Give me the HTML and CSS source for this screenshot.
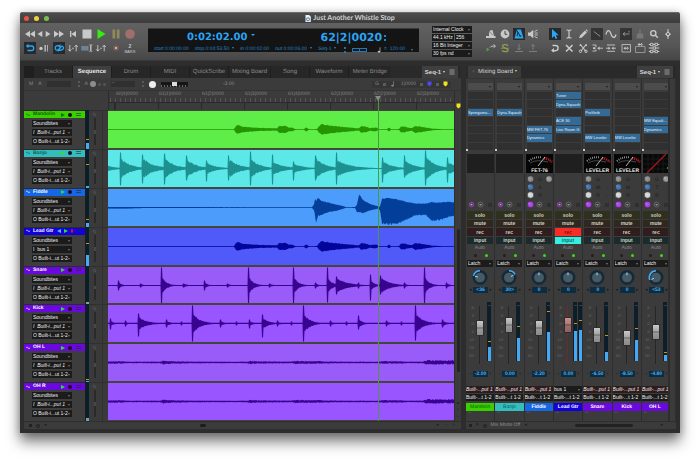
FILE: index.html
```html
<!DOCTYPE html>
<html lang="en">
<head>
<meta charset="utf-8">
<title>Just Another Whistle Stop</title>
<link rel="stylesheet" href="styles.css">
</head>
<body>
<svg class="sprite" aria-hidden="true">
  <symbol id="rewind" viewBox="0 0 12 12"><path fill="currentColor" d="M6 2.8v6.4L1 6zM11 2.8v6.4L6 6z"/></symbol>
  <symbol id="back" viewBox="0 0 6 12"><path fill="currentColor" d="M5.3 3v6L.6 6z"/></symbol>
  <symbol id="ahead" viewBox="0 0 6 12"><path fill="currentColor" d="M.7 3v6l4.7-3z"/></symbol>
  <symbol id="forward" viewBox="0 0 12 12"><path fill="currentColor" d="M1 2.8v6.4L6 6zM6 2.8v6.4L11 6z"/></symbol>
  <symbol id="start" viewBox="0 0 12 12"><path fill="currentColor" d="M3 3h1.3v6H3zM9 3v6L4.3 6z"/></symbol>
  <symbol id="stop" viewBox="0 0 12 12"><path fill="currentColor" d="M1.5 1.5h9v9h-9z"/></symbol>
  <symbol id="play" viewBox="0 0 12 12"><path fill="#35ee10" d="M2.5 1v10l8-5z"/></symbol>
  <symbol id="pause" viewBox="0 0 12 12"><path fill="#8f8b58" d="M2.5 1.5h2.7v9H2.5zM6.8 1.5h2.7v9H6.8z"/></symbol>
  <symbol id="record" viewBox="0 0 12 12"><circle cx="6" cy="6" r="4.8" fill="#a06e6b"/></symbol>
  <symbol id="loop-back" viewBox="0 0 12 12"><path fill="none" stroke="currentColor" stroke-width="1.3" d="M3 4h4.5a2.2 2.2 0 0 1 0 4.5h-4"/><path fill="currentColor" d="M4.5 1.8v4.4L1.8 4z"/></symbol>
  <symbol id="auto-stop" viewBox="0 0 12 12"><circle cx="3" cy="6.4" r="1.7" fill="currentColor"/><path fill="currentColor" d="M6.5 3h1.3v6.4H6.5zM9 3h.8v6.4H9z"/></symbol>
  <symbol id="link" viewBox="0 0 12 12"><path fill="none" stroke="currentColor" stroke-width="1.3" d="M7 4.2C4.500 3 2.200 4 2.200 6s2.300 3 4 1.200L7.800 5C9 3.300 10.500 4.400 10.500 6S8 9 5.500 7.800"/><path fill="currentColor" d="M7.500 2v4L5.200 4.200zM4.800 6.200v3.900l2.400-2z"/></symbol>
  <symbol id="swap" viewBox="0 0 12 12"><path fill="none" stroke="currentColor" stroke-width=".9" d="M2.800 3v6M1.200 7.300l1.600 1.900L4.400 7.300M9.200 9.300V3.200M7.600 5l1.600-1.900L10.800 5"/><circle cx="6" cy="6.300" r=".9" fill="#93b58a"/></symbol>
  <symbol id="step" viewBox="0 0 12 12"><path fill="#7790a5" d="M.5 4h7v4.500h-7z"/><path stroke="#59636c" stroke-width=".5" d="M2.200 4v4.500M4 4v4.500M5.700 4v4.500"/><path fill="none" stroke="currentColor" stroke-width=".9" d="M8.300 2.800c1 0 1.500.3 1.500.8v5c0 .5-.5.800-1.500.8M11.300 2.800c-1 0-1.500.3-1.500.8v5c0 .5.500.800 1.500.8"/></symbol>
  <symbol id="punch" viewBox="0 0 12 12"><circle cx="6" cy="6" r="2.800" fill="#815f5c"/><circle cx="6" cy="6" r="1.100" fill="#dbc4bf"/></symbol>

  <symbol id="pedal" viewBox="0 0 12 12"><path fill="currentColor" d="M4 8c-.5-4.500 1-6.500 3.500-6l1.500 6h1.500v2h-8zM1 8h2.500v2H1z"/><path stroke="#555" stroke-width=".6" d="M4.800 3.800 7.500 7"/></symbol>
  <symbol id="clock" viewBox="0 0 12 12"><circle cx="6" cy="6" r="4.400" fill="currentColor"/><path d="M6 3v3.300h2.300" fill="none" stroke="#444" stroke-width="1"/></symbol>
  <symbol id="metronome" viewBox="0 0 12 12"><path fill="currentColor" d="M4 1.500h4L10.500 10.500h-9z"/><path stroke="#242628" stroke-width="1" d="m3.800 2.500 3.700 6M5.800 8h2.500M4 8.200l1-4"/></symbol>
  <symbol id="speaker" viewBox="0 0 12 12"><path fill="currentColor" d="M1 4.500h2.200L6.300 1.700v8.600L3.200 7.700H1z"/><path fill="none" stroke="currentColor" stroke-width=".9" d="M7.500 3.500 10.500 2M7.500 5h3.300M7.500 7h3.300M7.500 8.500l3 1.500"/></symbol>
  <symbol id="pointer" viewBox="0 0 12 12"><path fill="currentColor" d="M3 1v9l2.200-2 1.500 3 1.600-.8-1.500-2.900H9.800z"/></symbol>
  <symbol id="ibeam" viewBox="0 0 12 12"><path fill="none" stroke="currentColor" stroke-width="1.200" d="M3.500 2C5 2 6 2.300 6 3.300v5.400C6 9.700 5 10 3.500 10M8.500 2C7 2 6 2.300 6 3.300v5.400C6 9.700 7 10 8.500 10"/></symbol>
  <symbol id="pencil" viewBox="0 0 12 12"><path fill="currentColor" d="M2 10.300 3 7.500l5-5L9.900 4.400l-5 5zM8.500 2l.8-.7L11 3l-.7.800z"/></symbol>
  <symbol id="ramp" viewBox="0 0 12 12"><path stroke="currentColor" stroke-width=".9" d="m2.800 3.500 6.400 4.800"/></symbol>
  <symbol id="sine" viewBox="0 0 12 12"><path fill="none" stroke="currentColor" stroke-width="1.200" d="M1 6.500C2 1.500 4.500 1.500 6 6s4 4.500 5 .5"/></symbol>
  <symbol id="nudge" viewBox="0 0 12 12"><path fill="none" stroke="currentColor" stroke-width=".9" d="M9.500 6H3M5 4.300 3 6l2 1.700M9 3v1.500"/></symbol>
  <symbol id="brush" viewBox="0 0 12 12"><path fill="#777" d="M5.400 1.500h1.200v4H9l.5 5h-7l.5-5h2.400z"/></symbol>
  <symbol id="zoom" viewBox="0 0 12 12"><circle cx="5.300" cy="5.200" r="2.600" fill="none" stroke="currentColor" stroke-width="1.400"/><path stroke="currentColor" stroke-width="1.600" d="m7.300 7.300 2.500 2.500"/></symbol>
  <symbol id="anchor" viewBox="0 0 12 12"><path stroke="currentColor" stroke-width="1" d="M6 1v10"/><path fill="currentColor" d="M6 3.200 9 6.200 6 9 3 6.200z"/><circle cx="6" cy="6" r=".9" fill="#444"/></symbol>
  <symbol id="send" viewBox="0 0 12 12"><path fill="#5c9d4d" d="M1.500 5.500v4L4.500 7.500z"/><path fill="none" stroke="currentColor" stroke-width=".9" d="M5 5.500C6 4 7.500 4 10 4.200M8.500 2.500l2 1.700-2 1.600"/></symbol>
  <symbol id="solo" viewBox="0 0 12 12"><path fill="none" stroke="#959b57" stroke-width="1.300" d="M9 3.700C7.500 2.300 3.500 2.200 3.500 4.300S9 5.700 9 8 4.500 10 3 8.500"/><path stroke="#959b57" stroke-width=".8" d="M1.800 6.200h8.400"/></symbol>
  <symbol id="down" viewBox="0 0 12 12"><path fill="none" stroke="#888" stroke-width=".8" d="M6 2v5.500M4.500 6 6 7.800 7.500 6M2 9.500h8"/></symbol>
  <symbol id="up" viewBox="0 0 12 12"><path fill="none" stroke="#888" stroke-width=".8" d="M6 8V2.500M4.500 4.300 6 2.500l1.500 1.800M2 9.500h8"/></symbol>
  <symbol id="cycle" viewBox="0 0 12 12"><path fill="none" stroke="currentColor" stroke-width="1.400" d="M3.500 3.500h3a2.500 2.500 0 0 1 0 5.200H3"/><path fill="currentColor" d="M5 6v4.500L2 8.500z"/></symbol>
  <symbol id="cross" viewBox="0 0 12 12"><path stroke="currentColor" stroke-width="1.600" d="m3 3 6.500 6.500M9.500 3 3 9.500"/></symbol>
  <symbol id="scissors" viewBox="0 0 12 12"><path stroke="currentColor" stroke-width="1.100" d="m3 2 5.500 7M9.500 2 4 9"/><path fill="none" stroke="currentColor" d="M2.500 3.500h2M8 3.500h2"/><circle cx="3.500" cy="9.300" r="1.200" fill="none" stroke="currentColor"/><circle cx="9" cy="9.300" r="1.200" fill="none" stroke="currentColor"/></symbol>
  <symbol id="split" viewBox="0 0 12 12"><path fill="none" stroke="currentColor" stroke-width=".9" d="M1.500 3H5v2M5 7.500V9H1.500M8 6.200h4"/><path fill="currentColor" d="M2 5.300h2.500v1.800H2zM8.500 4.300v4L6.300 6.200z"/></symbol>
  <symbol id="join" viewBox="0 0 12 12"><path fill="none" stroke="currentColor" stroke-width=".9" d="M2 3h8M2 9.300h8M1 6.200h3M8 6.200h3"/><path fill="currentColor" d="M3.500 4.500v3.400L5.500 6.200zM8.500 4.500v3.400L6.500 6.200z"/></symbol>
  <symbol id="fit" viewBox="0 0 12 12"><path fill="none" stroke="currentColor" stroke-width=".8" d="M2 2.500h8.500v7.500H2z"/><path fill="currentColor" d="M5.500 4.500v3.400l-2-1.700zM7 4.500v3.400l2-1.700zM5 5.700h2.500v1H5z"/></symbol>
  <symbol id="layer" viewBox="0 0 12 12"><path fill="none" stroke="#a4a4a4" stroke-width=".8" d="M1.500 4.500h9.500v6H1.500z"/><path fill="currentColor" d="M5.500.8v3.400l-2-1.700zM7 .8v3.400l2-1.700zM5 2h2.500v1H5z"/></symbol>
  <symbol id="sliders" viewBox="0 0 12 12"><path stroke="currentColor" stroke-width="1" d="M.8 2.500h10.500M.8 6h10.500M.8 9.500h10.500"/><path fill="#555" stroke="currentColor" stroke-width=".9" d="M2.500 1.300h2.500v2.400H2.500zM7 1.300h2.500v2.400H7zM5 4.800h2.500v2.400H5zM2.500 8.300h2.500v2.400H2.500zM7 8.300h2.500v2.400H7z"/></symbol>
  <symbol id="menu" viewBox="0 0 6 6"><path stroke="currentColor" stroke-width="1" d="M.5 1h5M.5 3h5M.5 5h5"/></symbol>
  <symbol id="note" viewBox="0 0 4 6"><path stroke="currentColor" stroke-width=".7" d="M3 .3v4.300"/><ellipse cx="2" cy="4.700" rx="1.300" ry=".9" fill="currentColor"/></symbol>
  <symbol id="pin" viewBox="0 0 5 6"><path fill="currentColor" d="M.5.500h4v3.200L2.500 5.500l-2-1.800z"/></symbol>
</svg>

<div class="window">
  <header class="titlebar">
    <span class="lights"><i class="red"></i><i class="amber"></i><i class="green"></i></span>
    <h1><svg class="doc" viewBox="0 0 6 7"><path fill="#e8eef4" d="M.5 0h3.700L5.800 1.700V7H.5z"/><circle cx="3" cy="4.300" r="1.500" fill="none" stroke="#4b79ad"/></svg>Just Another Whistle Stop</h1>
  </header>

  <div class="toolbar">
    <div class="transport">
      <button aria-label="Rewind"><svg><use href="#rewind"/></svg></button>
      <span class="pair"><button aria-label="Back"><svg><use href="#back"/></svg></button><button aria-label="Ahead"><svg><use href="#ahead"/></svg></button></span>
      <button aria-label="Fast forward"><svg><use href="#forward"/></svg></button>
      <button aria-label="Return to start"><svg><use href="#start"/></svg></button>
      <button aria-label="Stop"><svg><use href="#stop"/></svg></button>
      <button aria-label="Play"><svg><use href="#play"/></svg></button>
      <button aria-label="Pause"><svg><use href="#pause"/></svg></button>
      <button aria-label="Record"><svg><use href="#record"/></svg></button>
      <button class="on" aria-label="Auto rewind"><svg><use href="#loop-back"/></svg></button>
      <button aria-label="Auto stop"><svg><use href="#auto-stop"/></svg></button>
      <button class="on" aria-label="Link"><svg><use href="#link"/></svg></button>
      <button aria-label="Slave"><svg><use href="#swap"/></svg></button>
      <button aria-label="Step"><svg><use href="#step"/></svg></button>
      <button aria-label="Memory"><svg><use href="#swap"/></svg></button>
      <button aria-label="Punch"><svg><use href="#punch"/></svg></button>
      <button class="countoff"><b>2</b><span>BARS</span></button>
    </div>

    <div class="lcd">
      <div class="lcd-main">
        <span class="time">0:02:02.00<i class="tri"></i></span>
        <span class="bars">62|2|0020<i class="updown"></i></span>
      </div>
      <div class="lcd-sub">
        <span>start 0:00:00.00</span>
        <span>stop 0:04:53.50<i class="tri"></i></span>
        <span>in 0:00:02.00</span>
        <span>out 0:00:06.00<i class="tri"></i></span>
        <span>Seq-1<i class="tri"></i></span>
        <i class="updown"></i>
        <span class="scrub"></span>
        <span class="tempo"><svg><use href="#note"/></svg>= &nbsp;120.00<i class="tri"></i></span>
      </div>
    </div>

    <div class="clocks">
      <span class="pick"><select aria-label="Clock"><option>Internal Clock</option></select></span>
      <span class="split"><span class="pick"><select aria-label="Rate"><option>44.1 kHz</option></select></span><span class="pick"><select aria-label="Buffer"><option>256</option></select></span></span>
      <span class="pick"><select aria-label="Depth"><option>16 Bit Integer</option></select></span>
      <span class="pick"><select aria-label="Frames"><option>30 fps nd</option></select></span>
    </div>

    <div class="tools four">
      <button aria-label="Pedal"><svg><use href="#pedal"/></svg></button>
      <button aria-label="Clock"><svg><use href="#clock"/></svg></button>
      <button class="on" aria-label="Click"><svg><use href="#metronome"/></svg></button>
      <button aria-label="Audible"><svg><use href="#speaker"/></svg></button>
      <button aria-label="Send"><svg><use href="#send"/></svg></button>
      <button aria-label="Solo"><svg><use href="#solo"/></svg></button>
      <button aria-label="Down"><svg><use href="#down"/></svg></button>
      <button aria-label="Up"><svg><use href="#up"/></svg></button>
    </div>
    <div class="tools nine">
      <button class="on" aria-label="Pointer"><svg><use href="#pointer"/></svg></button>
      <button aria-label="I-beam"><svg><use href="#ibeam"/></svg></button>
      <button aria-label="Pencil"><svg><use href="#pencil"/></svg></button>
      <button class="off" aria-label="Line"><svg><use href="#ramp"/></svg></button>
      <button aria-label="Curve"><svg><use href="#sine"/></svg></button>
      <button class="off" aria-label="Nudge"><svg><use href="#nudge"/></svg></button>
      <button aria-label="Brush"><svg><use href="#brush"/></svg></button>
      <button aria-label="Zoom"><svg><use href="#zoom"/></svg></button>
      <button aria-label="Anchor"><svg><use href="#anchor"/></svg></button>
      <button aria-label="Cycle"><svg><use href="#cycle"/></svg></button>
      <button aria-label="Mute"><svg><use href="#cross"/></svg></button>
      <button aria-label="Scissors"><svg><use href="#scissors"/></svg></button>
      <button aria-label="Split"><svg><use href="#split"/></svg></button>
      <button aria-label="Join"><svg><use href="#join"/></svg></button>
      <button aria-label="Fit"><svg><use href="#fit"/></svg></button>
      <button aria-label="Layer"><svg><use href="#layer"/></svg></button>
      <button aria-label="Sliders"><svg><use href="#sliders"/></svg></button>
    </div>
  </div>

  <main class="panels">
    <section class="panel editor">
      <nav class="tabs">
        <span class="lead"></span>
        <a href="#tracks">Tracks</a><a href="#sequence" class="current">Sequence</a><a href="#drum">Drum</a><a href="#midi">MIDI</a><a href="#quick">QuickScribe</a><a href="#mixing" class="long">Mixing Board</a><a href="#song">Song</a><a href="#wave">Waveform</a><a href="#bridge" class="long last">Meter Bridge</a>
        <button class="seq">Seq-1<i class="tri"></i><svg><use href="#menu"/></svg></button>
      </nav>
      <div class="infobar">
        <span>M</span><span>A</span><span class="well"></span><i class="updown"></i>
        <span class="autos">A<i class="dot big"></i><i class="dot"></i><i class="dot"></i></span>
        <span class="well">–</span><i class="updown"></i>
        <i class="dot white"></i>
        <span class="ladder"><i></i></span>
        <span class="gain">-3.00</span>
        <span class="snap"><span>G</span><i class="sq"></i><svg><use href="#note"/></svg><span class="unit">1|0000</span><i class="sq dim"></i><svg class="blue"><use href="#pin"/></svg><i class="sq dim"></i><svg class="yellow"><use href="#pin"/></svg></span>
      </div>
      <div class="timeline">
        <div class="ruler">
          <ol class="marks"><li>60|4|0000</li><li>61|1|0000</li><li>61|2|0000</li><li>61|3|0000</li><li>61|4|0000</li><li>62|1|0000</li><li>62|2|0000</li><li>62|3|0000</li></ol>
          <div class="ticks"></div>
          <div class="lane"></div>
        </div>
        <div class="rows" id="rows"></div>
        <div class="vscroll"><svg class="yellow"><use href="#pin"/></svg><i class="thumb"></i><span>▴</span><span>+</span><span>−</span></div>
        <div class="overlay"><div class="playhead"></div></div>
      </div>
      <footer class="foot"><span class="left"><i class="sq"></i><i class="ring"></i>◂</span><i class="thumb"></i><span class="right"><span>▸</span><span>−</span><span>+</span></span></footer>
    </section>

    <section class="panel mixer">
      <nav class="tabs">
        <a href="#mixing" class="board"><small>×</small>Mixing Board<i class="tri"></i></a>
        <button class="seq">Seq-1<i class="tri"></i><svg><use href="#menu"/></svg></button>
      </nav>
      <div class="desk"><div class="channels" id="channels"></div><div class="gutter"></div></div>
      <footer class="foot"><span class="left"><i class="sq"></i>▾<i class="ring"></i><span class="mode">Mix Mode Off</span></span><span>◂</span><i class="thumb wide"></i><span>▸</span></footer>
    </section>
  </main>
</div>
<script src="script.js"></script>
</body>
</html>
```
FILE: styles.css
```css
* { box-sizing: border-box; }
body {
  margin: 0;
  padding: 12px 20px 28px;
  height: 100vh;
  display: flex;
  background: #fff;
  color: #c8c8c8;
  font: 5px/7px "Liberation Sans", Arial, sans-serif;
  text-rendering: geometricPrecision;
}
button, select, input { font: inherit; color: inherit; margin: 0; padding: 0; border: 0; background: none; border-radius: 0; }
a { color: inherit; text-decoration: none; }
svg { display: block; }
i { font-style: normal; display: inline-block; }
.sprite { position: absolute; width: 0; height: 0; }

.window {
  flex: 1;
  min-width: 0;
  display: flex;
  flex-direction: column;
  background: #2d2d2d;
  border-radius: 3px 3px 0 0;
  box-shadow: 0 9px 14px rgba(0, 0, 0, .5), 0 1px 8px rgba(0, 0, 0, .25);
}

.titlebar {
  flex: none;
  height: 11px;
  display: grid;
  grid-template-columns: 1fr auto 1fr;
  align-items: center;
  padding: 0 4px;
  border-top: 1px solid #6a6a6a;
  border-radius: 3px 3px 0 0;
  background: linear-gradient(#4c4c4c, #3d3d3d);
}
.titlebar h1 { margin: 0; display: flex; gap: 2px; align-items: center; font: bold 7px/10px Lato, "Liberation Sans", sans-serif; color: #d2d2d2; }
.doc { width: 6px; height: 7px; }
.lights { display: flex; gap: 5px; }
.lights i { width: 5px; height: 5px; border-radius: 50%; }
.red { background: #f0503f; }
.amber { background: #f3cf3a; }
.green { background: #7cc04b; }

.toolbar {
  flex: none;
  height: 38px;
  display: flex;
  padding: 3px 5px 4px 3px;
  background: linear-gradient(#616161, #565656 60%, #464646);
  border-bottom: 1px solid #3a3a3a;
}
.toolbar > * { flex: none; }
.transport, .tools { display: grid; grid-auto-rows: 14px; align-items: center; align-content: start; color: #c9c9c9; padding-top: 1px; }
.transport { grid-template-columns: repeat(8, 1fr); width: 114px; }
.transport button, .tools button { width: 12px; height: 12px; justify-self: center; }
.transport svg, .tools svg { width: 12px; height: 12px; }
.transport .pair { display: flex; justify-content: center; gap: 2px; }
.transport .pair button, .transport .pair svg { width: 6px; }
button.on { background: #28292b; color: #28a8f4; }
button.off { background: #333435; color: #999; }
.countoff { display: flex; flex-direction: column; align-items: center; font-size: 4px; line-height: 5px; padding-top: 1px; }
.countoff b { font-size: 5px; line-height: 6px; }

.toolbar .lcd { flex: 1 1 0; min-width: 0; margin: 2px 0 4px 11px; background: #141414; color: #2ba4f5; border-top: 1px solid #3a3a3a; padding: 2px 6px; white-space: nowrap; }
.lcd-main { display: flex; gap: 66px; padding-left: 33px; font: bold 10px/13px "DejaVu Sans", sans-serif; }
.lcd-main .bars { font-size: 11px; }
.lcd-sub { display: flex; gap: 6px; align-items: center; color: #2387cd; padding-top: 2px; }
.tri { width: 0; height: 0; border: solid transparent; border-width: 2px 1px 0; border-top-color: currentColor; margin-left: 3px; vertical-align: 1px; }
.lcd-main .tri { vertical-align: 4px; border-width: 2px 2px 0; }
.updown { width: 2px; height: 6px; background: linear-gradient(currentColor 2px, transparent 2px 4px, currentColor 4px); margin-left: 2px; opacity: .8; }
.scrub { width: 23px; height: 4px; border: 1px solid #1f79b8; margin: 0 4px 0 0; background: linear-gradient(90deg, transparent 45%, #1f79b8 45% 55%, transparent 55%); }
.tempo { display: flex; align-items: center; gap: 3px; }
.tempo svg { width: 4px; height: 6px; color: #b9c4cc; }

.pick { position: relative; display: block; background: #1b1b1b; min-width: 0; }
.pick select { appearance: none; display: block; width: 100%; height: 7px; line-height: 7px; padding: 0 1px; color: #eee; outline: 0; }
.pick::after { content: ""; position: absolute; right: 2px; top: 3px; border: solid transparent; border-width: 2px 1px 0; border-top-color: #777; }
.clocks { width: 40px; margin: 0 0 0 13px; display: grid; gap: 1px; align-content: start; }
.clocks .split { display: grid; grid-template-columns: 22px 1fr; gap: 1px; }
.clocks .split .pick::after { display: none; }

.tools.four { width: 56px; grid-template-columns: repeat(4, 1fr); margin-left: 12px; }
.tools.nine { width: 127px; grid-template-columns: repeat(9, 1fr); margin-left: 8px; }

.panels { flex: 1; min-height: 0; display: grid; grid-template-columns: 437fr 210fr; grid-template-rows: minmax(0, 1fr); gap: 5px; padding: 5px 4px 4px; }
.panel { display: flex; flex-direction: column; min-width: 0; min-height: 0; background: #3b3b3b; }

.tabs { flex: none; height: 12px; display: flex; background: #2a2a2a; font-size: 6px; line-height: 12px; color: #8b8b8b; padding-right: 3px; }
.tabs a { flex: 0 0 39px; text-align: center; background: #272727; border-right: 1px solid #1e1e1e; white-space: nowrap; }
.tabs .lead { width: 10px; background: #1f1f1f; }
.tabs a.long { flex-basis: 42px; }
.tabs a.last { border: 0; }
.tabs a.current { background: #3f3f3f; color: #e6e6e6; font-weight: bold; }
.tabs .seq { margin-left: auto; width: 36px; height: 12px; display: flex; align-items: center; justify-content: center; background: #3f3f3f; color: #d8d8d8; font-weight: bold; }
.tabs .seq .tri { margin-left: 2px; }
.tabs .seq svg { width: 6px; height: 6px; margin-left: 4px; color: #999; }
.tabs a.board { flex: 0 0 53px; background: #3b3b3b; border: 0; margin-left: 2px; color: #d4d4d4; }
.board small { font-size: 5px; color: #666; margin-right: 3px; }
.board .tri { margin-left: 2px; }

.infobar { flex: none; height: 13px; display: flex; align-items: center; gap: 5px; padding: 0 10px 0 5px; color: #888; border-bottom: 1px solid #333; }
.infobar > * { flex: none; }
.well { width: 24px; height: 6px; background: #303030; line-height: 5px; padding-left: 1px; }
.infobar .updown, .infobar .sq { opacity: .4; }
.autos { display: flex; align-items: center; gap: 2px; }
.dot { width: 3px; height: 3px; border-radius: 50%; background: #555; }
.dot.big { width: 6px; height: 6px; background: #8c8c8c; }
.dot.white { width: 7px; height: 7px; background: #eee; }
.ladder { width: 27px; height: 5px; background: repeating-linear-gradient(90deg, #666 0 1px, #1d1d1d 1px 3px) bottom / 100% 2px no-repeat, #161616; display: flex; justify-content: center; }
.ladder i { width: 5px; height: 4px; background: #ddd; }
.gain { margin-left: 30px; }
.snap { margin-left: auto; display: flex; align-items: center; gap: 4px; background: #353535; padding: 0 3px; }
.snap svg, .vscroll svg { width: 5px; height: 6px; }
.snap .unit { margin-left: 2px; }
.sq { width: 3px; height: 3px; background: #999; }
.blue { color: #4c48f5; }
.yellow { color: #f5e21b; }

.timeline { flex: 1; min-height: 0; position: relative; display: grid; grid-template: 19px minmax(0, 1fr) / minmax(0, 1fr) 7px; }
.ruler { margin-left: 84px; border-left: 1px solid #2c2c2c; display: flex; flex-direction: column; overflow: hidden; }
.marks { list-style: none; margin: 0; padding: 0 0 0 7px; display: flex; color: #848484; height: 7px; }
.marks li { flex: 0 0 43px; }
.ticks { height: 4px; background: repeating-linear-gradient(90deg, #666 0 1px, transparent 1px 5px) 6px 0; opacity: .6; }
.lane { flex: 1; border-top: 1px solid #2a2a2a; background: repeating-linear-gradient(90deg, #2a2a2a 0 1px, transparent 1px 43px) 6px 0; }
.rows { grid-row: 2; display: grid; grid-auto-rows: minmax(0, 1fr); background: #45453a; }
.row { display: grid; grid-template-columns: 61px 4px 19px minmax(0, 1fr); grid-template-rows: minmax(0, 1fr); min-height: 0; }
.strip { background: #3d3d3d; overflow: hidden; border-top: 1px solid #2b2b2b; }
.strip h2 { margin: 0; height: 7px; display: flex; align-items: center; gap: 3px; padding: 0 4px 0 2px; font: bold 5px/7px "Liberation Sans", Arial, sans-serif; background: var(--name); color: var(--ink); white-space: nowrap; }
.strip h2 span { flex: 1; }
.strip h2 svg { width: 4px; height: 4px; flex: none; }
.strip h2 .rec { width: 4px; height: 4px; border-radius: 50%; background: #200814; }
.strip h2 .rec.armed { background: #e3141b; }
.strip h2 .opts { width: 5px; height: 4px; margin-left: 1px; background: repeating-linear-gradient(currentColor 0 1px, transparent 1px 2px); opacity: .55; color: #223; }
.ports { width: 40px; margin: 2px 0 0 8px; display: grid; gap: 2px; }
.ports .italic select, .outs .italic select { font-style: italic; }
.vu { position: relative; background: #08202e; border-left: 1px solid #1c1c1c; overflow: hidden; }
.vu b, .vu u { position: absolute; left: 0; right: 0; bottom: 0; background: #45a9f5; }
.vu u { height: 1px; background: #c9951f; }
.side { background: linear-gradient(90deg, transparent 13px, #303030 13px 14px, transparent 14px), #3a3a3a; border-top: 1px solid #303030; display: grid; grid-template: 6px 1fr / 9px; justify-items: center; padding: 1px 0 4px 1px; color: #5c5c5c; }
.side svg { width: 5px; height: 5px; }
.side i { width: 2px; background: linear-gradient(#2a2a2a 45%, #484848 45% 58%, #2a2a2a 58%); }
.clip { margin: 1px 0; background: var(--clip); min-height: 0; overflow: hidden; }
.clip svg { width: 100%; height: 100%; }
.clip path { fill: var(--wave); }
.vscroll { grid-area: 1 / 2 / 3 / 3; min-height: 0; display: flex; flex-direction: column; align-items: center; border-left: 1px solid #2e2e2e; padding-top: 12px; color: #222; }
.vscroll .thumb { width: 3px; flex: 0 0 45%; margin: 120px 0 auto; background: #242424; border-radius: 2px; }
.overlay { position: absolute; inset: 6px 7px 0 84px; pointer-events: none; }
.playhead { position: absolute; left: 78%; top: 0; bottom: 0; width: 1px; background: #4a9b3a; }
.playhead::before { content: ""; position: absolute; left: -3px; top: -1px; border: solid transparent; border-width: 5px 3px 0; border-top-color: #8a8a8a; }

.foot { flex: none; height: 8px; display: flex; align-items: center; gap: 4px; padding: 0 6px 0 5px; color: #222; border-top: 1px solid #2e2e2e; }
.foot .left, .foot .right { display: flex; align-items: center; gap: 4px; white-space: nowrap; }
.foot .ring { width: 4px; height: 4px; border: 1px solid #222; border-radius: 50%; }
.foot .sq { background: #222; }
.editor .foot .thumb { width: 6px; height: 3px; background: #1c1c1c; border-radius: 2px; margin-left: 149px; }
.editor .foot .right { margin-left: auto; gap: 5px; }
.foot .mode { color: #8b8b8b; }
.foot .thumb.wide { flex: 0 0 58px; height: 3px; border-radius: 2px; background: #222; margin: 0 24px 0 44px; }
.mixer .foot { padding: 0 9px 0 3px; }

.desk { flex: 1; min-height: 0; display: flex; }
.channels { flex: 1; min-width: 0; display: grid; grid-template-columns: repeat(6, minmax(0, 13fr)) minmax(0, 12fr); grid-template-rows: minmax(0, 1fr); overflow: hidden; }
.gutter { flex: 0 0 7px; border: solid #2e2e2e; border-width: 1px 1px 0; }
.channel { display: flex; flex-direction: column; min-height: 0; padding-top: 4px; overflow: hidden; border-right: 1px solid #2e2e2e; border-top: 1px solid #333; }
.channel > * { flex: none; width: 28px; }
.source { padding: 0 1px 0 2px; }
.source .pick { background: #4c4c4c; }
.source .pick::after { border-top-color: #1c1c1c; }
.slots { height: 58px; display: grid; grid-auto-rows: 1fr; gap: 1px; padding: 0 1px 0 2px; margin-top: 2px; }
.slots button { background: #303030; color: #e6f1fa; font-size: 4px; text-align: left; line-height: 7px; white-space: nowrap; overflow: hidden; min-width: 0; min-height: 0; }
.slots button.used { background: #336a96; }
.slots + .grip { width: 2px; height: 2px; background: #cfcfb8; margin-top: -1px; }
.screen { height: 19px; margin: 3px 0 0 1px; }
.channel > .screen { width: 27px; background: #1f1f1f; }
.screen svg { width: 27px; height: 19px; }
.fx { height: 34px; margin-top: 2px; }
.fx svg { width: 28px; height: 34px; }
.fx text { font-size: 5px; fill: #1c1c1c; text-anchor: middle; }
.modes { height: 33px; display: grid; grid-auto-rows: 1fr; gap: 1px; padding: 0 1px; margin-top: 2px; font-weight: bold; color: #cfcfc0; }
.modes button { line-height: 6px; text-align: center; min-height: 0; }
.modes .solo { background: #30301e; }
.modes .mute { background: #30281f; }
.modes .rec { background: #301d1e; }
.modes .input { background: #1b2b2c; }
.modes .rec.lit { background: #fa2c28; color: #7d1512; }
.modes .input.lit { background: #35f0e2; color: #166d68; }
.auto { text-align: center; line-height: 7px; color: #8a8a8a; margin-top: 1px; }
.leds { display: flex; justify-content: center; gap: 8px; height: 7px; align-items: center; padding-left: 1px; }
.leds i { width: 3px; height: 3px; border-radius: 50%; background: #3a1416; }
.leds .go { background: #3ddb14; }
.latch { padding: 0 1px; margin-top: 1px; }
.knob { height: 17px; margin-top: 2px; }
.num { display: flex; align-items: center; justify-content: space-between; padding: 0 2px 0 3px; color: #1c1c1c; height: 6px; line-height: 6px; }
.num b { width: 15px; background: #0e2c3f; color: #41b0f7; text-align: center; }
.num.pan { margin-top: 1px; }
.channel > .mix { flex: 1; }
.mix { margin-top: 9px; display: grid; grid-template: minmax(0, 1fr) / 10px 8px 3px 1fr; min-height: 0; }
.scale { list-style: none; margin: 0; padding: 3px 1px 6px; font-size: 4px; line-height: 5px; color: #666; display: flex; flex-direction: column; justify-content: space-between; text-align: right; }
.fader { appearance: none; writing-mode: vertical-lr; direction: rtl; width: 8px; height: calc(100% - 4px); margin-top: 4px; background: linear-gradient(90deg, transparent 3px, var(--rail, #262626) 3px 4px, transparent 4px); }
.fader::-webkit-slider-thumb { appearance: none; width: 8px; height: 16px; border-radius: 1px; border: 1px solid #2d2d2d; background: var(--cap, linear-gradient(#c9c9c9, #a5a5a5 45%, #777 47% 53%, #9a9a9a 55%, #8a8a8a)); }
.armed .fader { --rail: #6b2c2c; --cap: linear-gradient(#c79090, #ad7979 45%, #7d5050 47% 53%, #a06d6d 55%, #926060); }
.bars2 { display: flex; gap: 1px; margin-bottom: 3px; }
.armed .bars2 { margin-left: -2px; }
.bars2 .vu { width: 4px; border-top: 1px solid #1a1a1a; }
.bars2 .vu::before { content: ""; position: absolute; left: 0; right: 0; top: 2px; height: 1px; background: #3b3b3b; }
.level { margin-top: 7px; }
.outs { display: grid; gap: 1px; margin-top: 9px; }
.outs .pick:not(.bus)::after { display: none; }
.outs select { padding: 0; }
.outs .italic { background: #2e1b1c; }
.tag { height: 8px; margin-top: 2px; line-height: 8px; text-align: center; background: var(--name); color: var(--ink); }
.tag.strong { font-weight: bold; }
.channel > .tag { width: 100%; min-width: 26px; }
.tail { height: 10px; padding-left: 2px; line-height: 4px; color: #777; }
```
FILE: script.js
```js
// Envelope points are [x, up, down] in clip units: 346 wide, 37 high.
const BLOBS = [[0,.2],[126,.2],[128,3.5],[130,4.5],[134,3],[142,2.2],[150,1.5],[169,1],[171,3.5],[178,3.5],[181,1.8],[184,2],[187,.3],[196,.2],[198,2],[201,.2],[209,.3],[211,3.5],[214,5.5],[219,4.5],[226,3.5],[236,2.5],[251,1],[253,3.4],[259,2.5],[262,1.2],[268,2],[271,.2],[279,.2],[281,2],[283,.2],[291,.3],[293,3],[297,3],[299,2],[304,1.2],[307,3.5],[313,2.8],[320,1.5],[325,.6],[334,.2],[346,.2]];

// A hit is [x, up, down, body, length]: a one-pixel spike and a decaying body.
const BANJO = [[-12,14,14,9,18],[12,16,17,11,18],[34,14,15,11,20],[56,15,16,11,18],[78,13,12,10,18],[98,8,13,6,18],[120,13,12,10,20],[142,17,17,10,18],[164,14,16,7,22],[185,7,12,5,20],[207,13,12,11,18],[228,16,16,9,26],[274,11,14,8,18],[296,13,9,9,18],[317,18,17,13,18],[339,11,14,7,18]];
const SNARE = [[10,5,5,4,6],[32,2,2,2,6],[53,18,18,10,9],[75,2,2,2,8],[96,5,5,4,6],[119,2,2,2,6],[140,18,18,10,9],[161,2,2,2,7],[185,18,18,10,9],[207,3,3,3,5],[219,18,17,9,9],[228,9,9,8,20],[250,3,3,2,6],[262,11,15,6,8],[272,10,9,9,17],[296,3,3,2,7],[316,18,18,10,9],[338,3,3,3,6]];
const KICK = [[2,5,6,3,7],[17,3,3,2,6],[30,10,13,7,16],[58,4,4,3,8],[73,2,2,1,6],[84,18,18,11,14],[112,4,4,3,7],[128,2,2,1,6],[141,4,5,3,7],[154,9,14,6,12],[169,3,3,2,8],[183,2,2,1,6],[195,18,18,11,12],[222,3,3,2,8],[238,2,2,1,6],[250,8,6,5,8],[278,3,3,2,8],[293,2,2,1,6],[307,18,17,11,14],[334,4,4,3,8]];
const FIDDLE = [[0,.2,1],[20,.2,1],[35,.2,.4],[80,.2,.3],[204,.2,.2],[206,3,3],[207,9,8],[208,7,17],[210,10,9],[213,7,8],[220,5,5],[230,2.5,3],[236,1,1],[238,.2,.2],[247,.3,.3],[249,3,5],[251,14,5],[255,8,6],[262,3.5,3],[270,1,1],[272,.5,3],[274,9,17],[279,10,18],[290,8,17],[300,5.5,12],[308,4,8],[318,4,8],[324,5.5,14],[332,5,13],[340,6,10],[346,5,9]];
const ROOM = [[0,1.2],[16,1.2],[18,.7],[52,.8],[55,2],[60,1.6],[70,1],[100,.7],[139,.7],[142,1.8],[150,1.2],[184,.8],[186,1.5],[210,1.4],[225,.8],[272,.7],[275,1.4],[295,1.2],[300,.7],[315,.8],[318,2.4],[335,2],[346,2.2]];

let seed = 7;
const noise = () => (seed = (seed * 16807) % 2147483647) / 2147483647;

function area(sample) {
  const top = [], bottom = [];
  for (let x = 0; x <= 346; x += .5) {
    const [up, down] = sample(x);
    top.push(`${x} ${(18.5 - up).toFixed(1)}`);
    bottom.unshift(`${x} ${(18.5 + down).toFixed(1)}`);
  }
  return `M${top.join("L")}L${bottom.join("L")}z`;
}
const contour = (points, rough) => area(x => {
  const k = Math.max(1, points.findIndex(p => p[0] >= x));
  const a = points[k - 1], b = points[k], t = (x - a[0]) / (b[0] - a[0]);
  const at = i => (a[i] ?? a[1]) * (1 - t) + (b[i] ?? b[1]) * t;
  return [at(1) * (1 - rough * noise()) + .2, at(2) * (1 - rough * noise()) + .2];
});
const hits = (list, floor) => area(x => {
  let up = floor, down = floor;
  for (const [at, u, d, body, length] of list) {
    const t = x - at;
    if (t < 0 || t > length * 2.4) continue;
    const b = body * Math.exp(-t / length * 1.9) * (.8 + .3 * noise());
    up = Math.max(up, t <= 1 ? u : b);
    down = Math.max(down, t <= 1 ? d : b);
  }
  return [up, down];
});

const wave = {
  blobs: contour(BLOBS, .2), fiddle: contour(FIDDLE, .15), room: contour(ROOM, .6),
  banjo: hits(BANJO, .5), snare: hits(SNARE, .5), kick: hits(KICK, .6)
};

const PURPLE = { name: "#6a08e0", ink: "#fff", wave: "#37038f" };
const tracks = [
  { title: "Mandolin", name: "#3ad000", ink: "#125c00", clip: "#5eee47", wave: "#259400", shape: "blobs", level: 16, peak: 22 },
  { title: "Banjo", name: "#35bcbc", ink: "#0c5d60", clip: "#5ce8e8", wave: "#1d9090", shape: "banjo", level: 5, peak: 58 },
  { title: "Fiddle", name: "#1667e6", ink: "#fff", clip: "#4c9dfb", wave: "#033e98", shape: "fiddle", level: 10, peak: 18 },
  { title: "Lead Gtr", name: "#1200dd", ink: "#fff", clip: "#4f5af8", wave: "#03059a", shape: "blobs", level: 28, peak: 55, armed: true },
  { title: "Snare", ...PURPLE, clip: "#9a5cf8", shape: "snare", level: 5, peak: 3 },
  { title: "Kick", ...PURPLE, clip: "#9955ff", shape: "kick", level: 0, peak: -5 },
  { title: "OH L", ...PURPLE, clip: "#9a5cf8", shape: "room", level: 4, peak: 6 },
  { title: "OH R", ...PURPLE, clip: "#9955ff", shape: "room", level: 4, peak: 6 }
];

const pick = (text, label, cls = "") =>
  `<span class="pick ${cls}"><select aria-label="${label}"><option>${text}</option></select></span>`;
const vu = (level, peak) =>
  `<div class="vu"><b style="height:${level}%"></b><u style="bottom:${peak}%"></u></div>`;
const tri = (fill, d) => `<svg viewBox="0 0 4 4"><path fill="${fill}" d="${d}"/></svg>`;

document.getElementById("rows").innerHTML = tracks.map((t, i) => `
  <div class="row" style="--name:${t.name};--ink:${t.ink};--clip:${t.clip};--wave:${t.wave}">
    <div class="strip">
      <h2><svg viewBox="0 0 4 4"><path fill="none" stroke="currentColor" stroke-width=".7" d="M0 2c1-2 1.500-1 2 0s1.500 1 2-.5"/></svg><span>${t.title}</span>
        ${t.armed ? tri("#3cc8e8", "M4 0v4L0 2z") : ""}${tri(i ? "#2ee22a" : "#126f08", "M0 0v4L4 2z")}<i class="rec ${t.armed ? "armed" : ""}"></i><i class="opts"></i></h2>
      <div class="ports">
        ${pick("Soundbites", t.title + " edit")}
        ${t.armed ? pick("I &nbsp;bus 1", t.title + " in") : pick("I &nbsp;Built-i...put 1", t.title + " in", "italic")}
        ${pick("O Built-i...ut 1-2", t.title + " out")}
      </div>
    </div>
    ${vu(t.level, t.peak)}
    <div class="side"><svg><use href="#zoom"/></svg><i></i></div>
    <div class="clip"><svg viewBox="0 0 346 37" preserveAspectRatio="none"><path d="${wave[t.shape]}"/></svg></div>
  </div>`).join("");

const channels = [
  { slots: { 2: "Springama..." }, pan: -36, fader: 66, meters: [[24, 32]], db: "-2.00" },
  { slots: { 2: "Dyna-Squash" }, pan: 30, fader: 74, meters: [[40, 59]], db: "0.00" },
  { slots: { 4: "MW FET-76", 5: "Dynamics" }, unit: "FET-76", letters: "GAR", pan: 0, fader: 66, meters: [[50, 84]], db: "-2.20" },
  { slots: { 0: "Tuner", 1: "Dyna-Squash", 3: "ACE 30", 4: "Live Room G" }, pan: 0, fader: 74, meters: [[52, 64], [54, 69]], db: "0.00", armed: true },
  { slots: { 2: "ProVerb", 5: "MW Leveler" }, unit: "LEVELER", letters: "GMR", pan: 0, fader: 50, meters: [[16, 43]], db: "-6.50" },
  { slots: { 5: "MW Leveler" }, unit: "LEVELER", letters: "GMR", pan: 0, fader: 44, meters: [[37, 55]], db: "-8.50" },
  { slots: { 3: "MW Equali...", 4: "Dynamics" }, unit: "eq", letters: "GTR", pan: -53, fader: 57, meters: [[10, 14]], db: "-4.80" }
];

function screen(unit) {
  if (!unit) return "";
  if (unit === "eq") return `<svg viewBox="0 0 27 19"><path fill="#080808" d="M0 0h27v19H0z"/><path stroke="#242424" stroke-width=".5" d="M5 0v19M10 0v19M15 0v19M20 0v19M0 5h27M0 10h27M0 15h27"/><path stroke="#b01818" stroke-width="1.200" d="M4 19 23 0"/><path fill="#2f9a25" d="M24 13h2v2h-2z"/></svg>`;
  return `<svg viewBox="0 0 27 19"><path fill="#060606" d="M0 0h27v19H0z"/>
    <path fill="none" stroke="#bbb" stroke-width="2" stroke-dasharray=".7 1.300" d="M3 7q6-5 13-3.500"/><path fill="none" stroke="#b51d20" stroke-width="2.500" stroke-dasharray="1.300 .8" d="M18 4q4 .5 8 4"/>
    <path stroke="#ddd" stroke-width=".8" d="M12 12 19 3"/><path fill="none" stroke="#888" stroke-width=".5" d="M4 9q6-4 18-1"/>
    <text x="13.500" y="18" text-anchor="middle" font-size="5" font-weight="bold" fill="#eee">${unit}</text></svg>`;
}
function effects(letters) {
  const dial = (x, y, fill) => `<circle cx="${x}" cy="${y}" r="3.200" fill="${fill}" stroke="#222" stroke-width=".5"/><path stroke="#fff8" stroke-width=".6" d="M${x} ${y}l-2-1.500"/>`;
  const rows = letters ? [...letters].map((c, i) => dial(5.5, 4 + i * 8, ["#8d8d8d", "#4673ab", "#d5d5d5"][i]) + `<text x="15" y="${6 + i * 8}">${c}</text><text x="24" y="${6 + i * 8}">${i ? "-" : ""}</text>`).join("") + (letters !== "GMR" ? dial(24, 4, "#9a9a9a") : "") : "";
  const last = letters ? dial(5.5, 29.5, "#ae45ea") : `<circle cx="5.500" cy="29.500" r="2.300" fill="#6b3a7e" stroke="#83499a" stroke-width=".9"/><circle cx="5.500" cy="29.500" r=".8" fill="#c9a0d8"/>`;
  return `<svg viewBox="0 0 28 34">${rows}${last}<circle cx="14.500" cy="29.500" r="2.500" fill="none" stroke="#777" stroke-width=".7"/><path fill="#999" d="M13 29h3l-1.500 1.700z"/><path fill="#303030" d="M22 28h4v4h-4z"/></svg>`;
}
function knob(pan) {
  const a = pan / 64 * 135 * Math.PI / 180;
  const at = r => `${(14 + r * Math.sin(a)).toFixed(1)} ${(8.5 - r * Math.cos(a)).toFixed(1)}`;
  return `<svg class="knob" viewBox="0 0 28 17"><circle cx="14" cy="8.500" r="7.500" fill="#152b3a"/>
    <circle cx="14" cy="8.500" r="5.300" fill="#455c68" stroke="#101c24" stroke-width=".6"/>
    ${pan ? `<path fill="none" stroke="#47adf5" stroke-width="1.600" d="M14 1.800A6.700 6.700 0 0 ${pan > 0 ? 1 : 0} ${at(6.7)}"/>` : ""}
    <path stroke="#a8d9f5" stroke-width="1" d="M${at(2.2)}L${at(5)}"/></svg>`;
}

document.getElementById("channels").innerHTML = channels.map((c, i) => {
  const t = tracks[i];
  const lit = c.armed ? "lit" : "";
  const pan = c.pan < 0 ? `&lt;${-c.pan}` : c.pan > 0 ? `${c.pan}&gt;` : "0";
  return `<div class="channel ${c.armed ? "armed" : ""}" style="--name:${t.name};--ink:${t.ink}">
    <div class="source">${pick("", t.title + " input")}</div>
    <div class="slots">${[0, 1, 2, 3, 4, 5, 6].map(n => `<button class="${c.slots[n] ? "used" : ""}">${c.slots[n] || ""}</button>`).join("")}</div>
    <i class="grip"></i>
    <div class="screen">${screen(c.unit)}</div>
    <div class="fx">${effects(c.letters)}</div>
    <div class="modes"><button class="solo">solo</button><button class="mute">mute</button><button class="rec ${lit}">rec</button><button class="input ${lit}">input</button></div>
    <div class="auto">Auto</div>
    <div class="leds"><i></i><i class="go"></i></div>
    <div class="latch">${pick("Latch", t.title + " automation")}</div>
    ${knob(c.pan)}
    <div class="num pan"><span>◂</span><b>${pan}</b><span>▸</span></div>
    <div class="mix">
      <ol class="scale"><li>6-</li><li>3-</li><li>0-</li><li>5-</li><li>10-</li><li>25-</li><li>50-</li></ol>
      <input class="fader" type="range" value="${c.fader}" aria-label="${t.title} level"><span></span>
      <div class="bars2">${c.meters.map(m => vu(...m)).join("")}</div>
    </div>
    <div class="num level"><span>−</span><b>${c.db}</b><span>+</span></div>
    <div class="outs">${c.armed ? pick("bus 1", t.title + " bus", "bus") : pick("Built-...put 1", t.title + " bus", "italic")}${pick("Built-...t 1-2", t.title + " out")}</div>
    <div class="tag ${i > 1 ? "strong" : ""}">${t.title}</div>
    <div class="tail">–</div>
  </div>`;
}).join("");
```
